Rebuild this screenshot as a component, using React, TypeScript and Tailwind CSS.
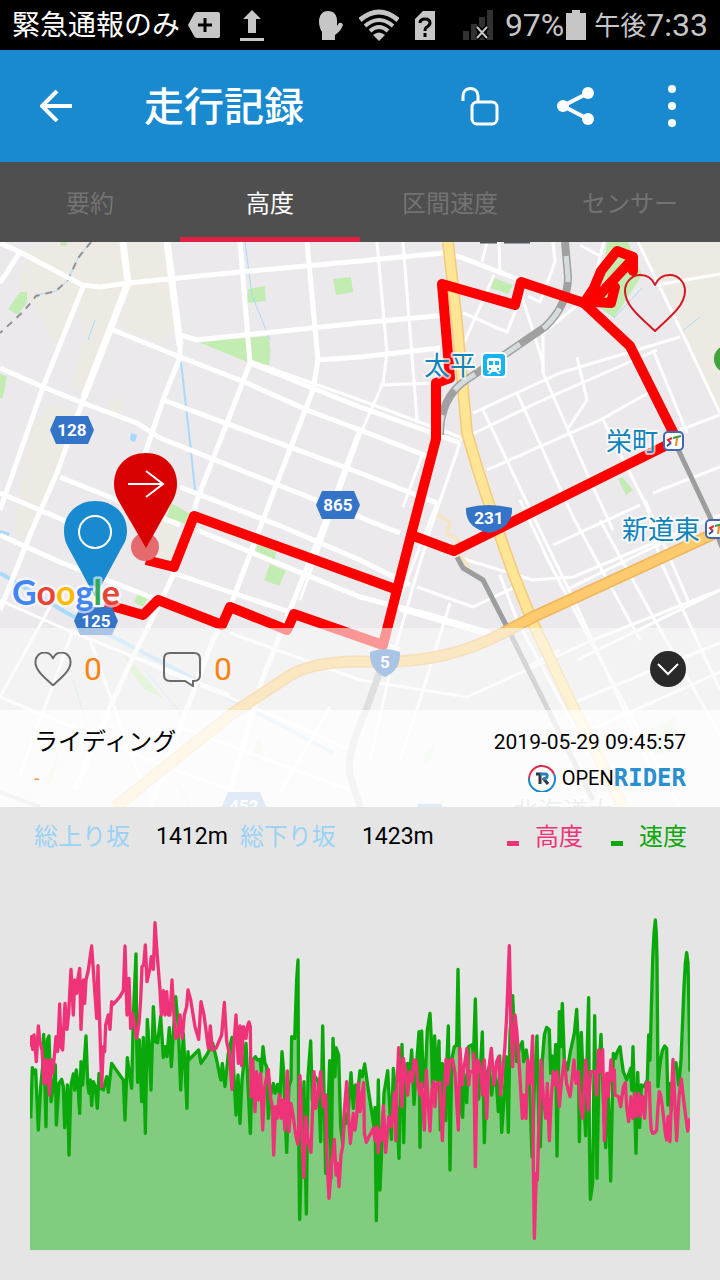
import React, { useState } from 'react'

const CJK = "font-['Roboto','Noto_Sans_CJK_JP',sans-serif]";

const tabs = ['要約', '高度', '区間速度', 'センサー'];

const roads = [
  'M0 243L20 252L82 285L100 287L128 283L240 272L360 261L443 253L460 257L520 280L584 303',
  'M20 252L0 283',
  'M123 242L128 283L83 400L57 473L32 530L18 565L0 610',
  'M83 287L43 387L0 510',
  'M167 242L180 337L180 357L163 400L147 448L125 510',
  'M240 242L250 363L227 423L197 500L177 567L160 603L133 657L110 707L75 790',
  'M307 242L318 360L313 390L277 483L230 607L213 640L180 727L150 807',
  'M113 330L180 357L247 383L307 410L360 430L432 458',
  'M180 335L197 340L360 323L447 315',
  'M250 363L360 407L460 443',
  'M318 360L360 357L440 348',
  'M0 368L43 387L83 403L137 423L160 438L283 487L400 533',
  'M163 400L360 473L437 503',
  'M60 477L117 500L180 525',
  'M180 487L283 527L360 560L410 585',
  'M197 530L360 597L430 615L490 633',
  'M0 493L63 520L110 540',
  'M0 535L60 562L158 600',
  'M173 573L290 612L400 650',
  'M360 430L330 510L262 680L230 790',
];

const streets = [
  'M377 242L387 353L383 383L360 435L300 600',
  'M403 242L417 420',
  'M487 242L482 262',
  'M499 242L500 275',
  'M553 242L555 262L540 302L528 296',
  'M520 290L543 363L543 373L593 487L613 530',
  'M463 313L507 332L520 300',
  'M460 352L494 275',
  'M380 385L433 383',
  'M604 242L590 295L543 333L543 373',
  'M580 245L600 256',
  'M638 242L687 343L720 413',
  'M657 285L720 274',
  'M473 413L560 373L680 337',
  'M460 440L543 400L657 350',
  'M487 470L600 420L650 392',
  'M577 357L587 400L567 430',
  'M517 393L573 517L640 640',
  'M483 410L540 530L580 613L660 790',
  'M653 350L687 433',
  'M603 420L647 507L660 560L720 690',
  'M653 493L720 467',
  'M680 430L720 415',
  'M460 443L430 530L412 590L395 650L370 760',
  'M423 453L403 507',
  'M437 503L395 610',
  'M417 587L473 607L513 588',
  'M400 610L487 635',
  'M450 603L420 700L400 760',
  'M520 500L548 560L590 640L680 807',
  'M600 520L653 617L720 735',
  'M457 557L510 573L533 580L573 577L720 515',
  'M570 588L668 540',
  'M553 545L640 505',
  'M577 660L720 590',
  'M527 667L560 650',
  'M573 703L660 667L720 643',
  'M590 730L720 672',
  'M230 633L360 680L467 697L593 640L720 590',
  'M0 600L67 630L230 695',
  'M0 697L167 767L260 800',
  'M50 607L0 697',
  'M73 630L20 775',
  'M90 640L143 787',
  'M330 707L280 793',
  'M133 657L300 727L360 755',
  'M180 727L350 790',
  'M645 500L690 605',
  'M500 575L517 620L560 700L610 790',
];

const route = 'M105 604L143 615L158 600L222 625L230 607L287 630L294 614L383 645L411 535L436 439L436 383L450 378L442 284L515 305L521 282L584 303L630 346L677 440L454 551L411 535M146 560L174 567L194 516L395 589';
const loop = 'M584 303L594 288L601 271L617 251L633 257L633 271M630 262L604 290L594 302L611 303L615 287';

// both series share the 1980 x 1050 plot area
const speed = '2,655 7,503 12,520 17,510 25,690 32,560 38,500 41,403 48,680 52,420 57,408 63,605 69,560 76,495 79,675 87,550 95,538 100,560 104,683 112,555 117,765 123,555 130,522 134,570 139,510 144,555 149,640 153,485 158,555 168,408 173,550 177,580 181,540 185,617 190,545 196,560 202,625 207,520 213,565 220,570 230,530 235,577 245,490 260,512 280,540 285,660 292,473 298,520 305,565 310,350 318,162 320,420 323,547 328,420 335,605 340,412 346,700 352,358 358,450 363,570 370,320 376,425 383,428 392,350 400,472 406,440 411,470 418,383 424,500 430,400 437,290 445,380 452,570 460,400 471,625 474,455 476,480 506,450 513,490 530,465 548,430 560,480 570,530 573,540 577,490 585,560 595,460 606,412 612,530 618,645 624,525 630,670 636,540 648,430 661,700 668,480 676,470 682,480 690,478 694,515 699,440 705,490 710,500 715,655 721,590 730,550 735,580 743,553 750,590 756,455 761,515 770,757 777,560 783,540 785,410 794,415 800,240 804,180 806,700 809,958 816,700 822,545 829,942 834,530 842,423 847,600 855,530 865,545 872,725 878,378 887,820 892,700 899,482 903,835 909,415 915,530 918,443 926,465 932,680 938,730 945,640 952,670 963,518 970,625 976,555 982,590 990,512 997,530 1004,492 1015,570 1032,680 1035,622 1039,962 1045,540 1050,870 1057,700 1062,580 1073,512 1078,600 1084,718 1090,505 1098,590 1107,775 1111,560 1116,433 1121,728 1125,560 1133,490 1138,540 1145,450 1152,613 1160,490 1167,395 1170,742 1175,393 1180,560 1185,545 1192,390 1200,340 1205,440 1208,590 1214,408 1220,540 1227,423 1231,690 1237,490 1247,662 1250,500 1255,378 1260,810 1265,480 1273,440 1280,436 1284,208 1288,440 1295,640 1298,652 1302,520 1310,608 1316,440 1328,433 1330,480 1336,297 1342,560 1346,597 1352,490 1357,396 1363,728 1370,520 1378,500 1385,585 1393,515 1400,560 1405,635 1409,468 1415,697 1422,600 1429,470 1435,697 1440,400 1448,287 1453,400 1460,485 1468,445 1477,425 1481,485 1489,450 1495,500 1500,590 1506,770 1513,560 1521,408 1527,700 1531,740 1537,480 1543,405 1550,382 1558,390 1562,520 1566,468 1572,540 1577,433 1581,768 1588,335 1592,440 1597,310 1603,480 1612,510 1622,450 1633,400 1640,328 1645,440 1648,725 1654,397 1660,560 1667,707 1672,440 1676,293 1678,700 1681,898 1688,850 1694,347 1701,835 1707,500 1713,403 1720,600 1727,743 1733,520 1742,843 1747,600 1750,460 1756,475 1762,455 1770,440 1775,480 1780,515 1790,540 1802,505 1805,570 1809,440 1818,760 1823,517 1829,682 1834,555 1842,560 1852,540 1856,405 1860,480 1864,330 1868,180 1872,100 1876,60 1879,100 1881,180 1884,560 1888,510 1892,480 1897,452 1904,438 1910,445 1914,615 1920,550 1924,630 1930,500 1938,488 1946,555 1953,480 1958,360 1962,260 1966,190 1970,158 1974,190 1976,280 1980,515';

const altitude = '0,440 5,410 8,448 12,405 19,485 25,378 30,425 36,450 42,550 45,480 50,550 54,480 58,585 65,480 68,520 73,470 78,410 83,455 89,312 93,440 98,450 105,310 111,388 116,340 123,208 130,345 134,240 140,280 143,240 149,205 153,388 160,240 164,310 168,240 175,210 185,138 192,240 200,355 204,197 210,400 215,560 220,440 224,455 227,375 235,345 240,388 245,305 251,312 270,290 280,272 285,138 291,345 297,235 302,385 308,340 320,415 327,370 332,300 336,200 341,195 346,135 351,245 360,205 364,170 370,208 375,68 382,170 390,270 394,345 400,272 405,345 410,275 415,345 420,345 426,240 431,330 437,415 443,410 450,345 457,415 463,345 470,320 474,270 482,300 495,380 506,418 513,305 522,345 535,445 541,378 547,450 558,445 575,405 583,307 590,425 598,460 606,568 612,430 618,345 625,490 630,378 635,497 640,380 648,415 652,380 657,366 661,380 663,590 668,480 675,635 680,515 686,600 692,520 698,690 704,560 715,508 722,595 727,620 731,765 737,620 741,655 748,585 753,655 758,600 765,690 772,513 777,695 783,610 790,650 797,705 803,732 806,690 810,527 816,700 821,832 828,650 834,720 843,757 852,515 857,625 862,600 872,515 880,620 887,585 892,800 897,895 905,790 913,718 918,825 923,790 927,860 933,765 938,740 942,645 950,545 955,640 961,730 970,640 975,690 980,650 985,548 990,635 1001,548 1003,700 1009,727 1016,712 1025,695 1030,685 1035,722 1041,680 1045,757 1050,690 1055,720 1060,617 1067,757 1076,650 1083,680 1088,640 1093,578 1097,722 1101,560 1106,443 1111,530 1116,620 1120,475 1127,515 1133,585 1140,515 1146,545 1152,480 1158,482 1163,550 1170,585 1175,550 1183,690 1189,510 1194,600 1200,693 1205,580 1210,545 1215,620 1220,550 1230,548 1237,722 1242,600 1248,478 1253,552 1260,480 1268,478 1275,520 1285,690 1290,445 1296,555 1304,490 1311,445 1316,555 1320,515 1330,515 1331,460 1336,800 1342,480 1348,490 1353,520 1358,585 1363,480 1370,655 1376,510 1384,445 1392,555 1400,485 1406,470 1412,585 1418,510 1424,450 1430,350 1438,137 1443,380 1448,500 1455,345 1461,400 1468,500 1477,655 1481,585 1488,655 1493,480 1500,550 1508,408 1510,800 1513,1015 1519,820 1522,840 1526,700 1533,480 1540,590 1547,655 1552,550 1558,722 1564,590 1570,515 1576,555 1581,515 1588,620 1596,530 1603,480 1610,552 1620,590 1626,540 1632,480 1638,550 1645,515 1652,620 1658,655 1667,480 1675,630 1682,515 1695,515 1700,585 1706,450 1712,515 1718,448 1723,722 1730,520 1735,590 1743,480 1748,540 1753,510 1755,585 1766,590 1772,620 1780,560 1786,548 1790,620 1796,665 1803,590 1808,655 1815,580 1819,650 1827,580 1831,650 1838,590 1844,655 1850,548 1858,548 1861,650 1864,690 1868,700 1875,698 1880,690 1884,620 1888,575 1892,585 1897,620 1906,700 1910,720 1914,650 1920,725 1924,600 1929,478 1935,620 1940,722 1947,590 1954,537 1962,610 1973,693 1980,655';

const StatusBar = () => (
  <div className="flex h-[50px] items-center bg-black pr-3 pl-3 text-[#c6c6c6]">
    <span className="pt-[2px] text-[28px] leading-[48px] text-white">緊急通報のみ</span>
    <svg className="ml-2 h-8 w-8" viewBox="0 0 32 32" aria-hidden="true">
      <path d="M9 3H30Q32 3 32 5V27Q32 29 30 29H9Q7 29 6 27L0 16L6 5Q7 3 9 3Z" fill="#c6c6c6" />
      <path d="M17 9V23M10 16H24" stroke="#000" strokeWidth="3" />
    </svg>
    <svg className="ml-5 h-8 w-6" viewBox="0 0 24 32" aria-hidden="true">
      <path d="M12 1L21 10H16V24H8V10H3ZM0 29H24V32H0Z" fill="#c6c6c6" />
    </svg>
    <span className="flex-1" />
    <svg className="h-8 w-6" viewBox="0 0 24 32" aria-hidden="true">
      <path d="M3 31V23C0 18 0 14 0 11C1 5 4 2 9 2C15 2 18 6 18 12V17L20 14Q23 13 24 16C22 21 19 24 16 26V31Z" fill="#c6c6c6" />
    </svg>
    <svg className="ml-4 h-8 w-10" viewBox="0 0 40 32" fill="none" stroke="#c6c6c6" aria-hidden="true">
      <path d="M1 11Q20 -5 39 11" strokeWidth="5" />
      <path d="M6 17Q20 5 34 17" strokeWidth="4" />
      <path d="M11 22Q20 14 29 22" strokeWidth="4" />
      <path d="M14 26Q20 21 26 26L20 32Z" fill="#c6c6c6" stroke="none" />
    </svg>
    <svg className="ml-4 h-8 w-5" viewBox="0 0 20 32" aria-hidden="true">
      <path d="M8 2H20V31H0V10Z" fill="#c6c6c6" />
      <path d="M5 14Q5 10 10 10Q15 10 15 14Q15 16 12 18Q10 19 10 22M10 24V28" stroke="#000" strokeWidth="3" fill="none" />
    </svg>
    <svg className="ml-7 h-8 w-[30px]" viewBox="0 0 30 32" aria-hidden="true">
      <path d="M0 22H6V31H0ZM8 15H14V31H8ZM16 8H22V31H16ZM24 1H30V31H24Z" fill="#323232" />
      <path d="M14 18L24 29M24 18L14 29" stroke="#000" strokeWidth="5" />
      <path d="M14 18L24 29M24 18L14 29" stroke="#c6c6c6" strokeWidth="2" />
    </svg>
    <span className="ml-3 text-[32px]">97%</span>
    <svg className="ml-[2px] h-8 w-5" viewBox="0 0 20 32" aria-hidden="true">
      <path d="M6 1H14V4H20V31H0V4H6Z" fill="#c6c6c6" />
    </svg>
    <span className="ml-2 pt-[2px] text-[26px]">午後</span>
    <span className="text-[32px]">7:33</span>
  </div>
)

const Hexagon = ({ x, y, label }: { x: number; y: number; label: string }) => (
  <g>
    <path d={`M${x - 22} ${y}L${x - 16} ${y - 14}H${x + 16}L${x + 22} ${y}L${x + 16} ${y + 14}H${x - 16}Z`} fill="#3474c8" />
    <text x={x} y={y + 6} textAnchor="middle" fontSize="17" fontWeight="700" fill="#fff">{label}</text>
  </g>
)

const SubwayBadge = ({ x, y }: { x: number; y: number }) => (
  <g fill="none">
    <rect x={x} y={y} width="19" height="18" rx="4" fill="#fff" stroke="#4666ae" strokeWidth="2" />
    <path d={`M${x + 8} ${y + 6}L${x + 4} ${y + 8}L${x + 7} ${y + 11}`} stroke="#d92c3a" strokeWidth="2" />
    <path d={`M${x + 7} ${y + 11}L${x + 3} ${y + 14}`} stroke="#2455a4" strokeWidth="2" />
    <path d={`M${x + 9} ${y + 6}L${x + 17} ${y + 4}`} stroke="#2d9a4b" strokeWidth="2" />
    <path d={`M${x + 13} ${y + 6}L${x + 12} ${y + 14}`} stroke="#ee8a1d" strokeWidth="2" />
  </g>
)

const RouteMap = () => (
  <svg className="block h-auto w-full" viewBox="0 242 720 565" role="img" aria-label="Map">
    <rect x="0" y="242" width="720" height="565" fill="#ebe9ec" />
    <g fill="#edeae3">
      <path d="M26 250L60 242H163L176 325L162 342L118 328L126 300L110 330L84 395L70 385L84 340L80 300L55 345L30 300L20 285Z" />
      <path d="M30 430L50 405L75 412L50 490L20 545L15 520Z" />
      <path d="M640 242H720V413L690 350L660 290Z" />
      <path d="M160 520L178 510L172 560L158 555Z" />
      <path d="M105 410L115 396L127 405L120 413Z" />
    </g>
    <g fill="#c3ecb2">
      <path d="M20 292L27 292L27 302L18 315L8 309Z" />
      <path d="M248 289L265 286L266 301L247 303Z" />
      <path d="M333 279L351 277L353 292L336 295Z" />
      <path d="M198 342L268 336Q272 348 269 365L250 363Z" />
      <path d="M0 374L7 376L3 398L0 398Z" />
      <path d="M60 242H68L66 246H61Z" />
      <path d="M171 503L190 514L186 524L167 517Z" />
      <path d="M257 544L276 552L275 560L256 552Z" />
      <path d="M270 564L286 571L279 586L264 580Z" />
      <path d="M138 594L148 598L143 607L134 602Z" />
      <path d="M494 278L513 285L508 294L491 288Z" />
      <path d="M607 242H628L642 275L624 303L614 318L600 308Z" />
      <path d="M622 477L633 490L626 495L618 479Z" />
      <path d="M124 653L163 698L145 690L130 670Z" />
      <path d="M65 730L45 787L52 782Z" />
      <path d="M255 742L262 740L260 762L252 760Z" />
      <path d="M650 730L677 716L672 750L655 755Z" />
      <path d="M425 753L435 742L431 760L424 765Z" />
    </g>
    <g fill="none" stroke="#a9dafa" strokeWidth="2">
      <path d="M91 242L78 258L68 280L56 291L36 295M95 320L88 340M245 242L252 295L270 340" strokeWidth="1" />
      <path d="M181 362L190 442L195 490" />
      <path d="M0 573L67 613L177 670L333 753" strokeWidth="4" />
      <path d="M145 670L180 712L183 735M73 680L87 725M642 288L614 318M680 333L700 317M175 780L190 807" strokeWidth="1" />
      <path d="M0 532L9 535" strokeWidth="4" />
    </g>
    <path d="M91 242L78 258L68 280L56 291L36 296L24 311L0 333" fill="none" stroke="#8f9296" strokeWidth="2" strokeDasharray="7 6" />
    <path d="M131 433L137 435L135 442L130 440Z" fill="#a5d8ff" />
    <g fill="none" stroke="#fff" strokeLinejoin="round">
      {streets.map((d) => <path key={d} d={d} strokeWidth="3" />)}
      {roads.map((d) => <path key={d} d={d} strokeWidth="5" />)}
      <path d="M167 242L180 345M123 242L128 283L84 397" strokeWidth="7" />
      <path d="M250 361L360 400L460 437" strokeWidth="3" />
    </g>
    <path d="M480 242H497M504 242H530" stroke="#4c5560" strokeWidth="3" />
    <path d="M437 514L450 522L447 533L458 540L455 550L470 568" fill="none" stroke="#f6e4c4" strokeWidth="4" />
    <g fill="none" strokeLinejoin="round">
      <path d="M448 242L457 323L467 433L477 467L490 507L513 573L533 623L573 707L623 807" stroke="#f3c97c" strokeWidth="12" />
      <path d="M448 242L457 323L467 433L477 467L490 507L513 573L533 623L573 707L623 807" stroke="#ffe594" strokeWidth="9" />
      <path d="M565 242L568 277Q568 305 545 327L507 353L466 380Q440 398 440 435" stroke="#a0a0a0" strokeWidth="8" />
      <path d="M565 242L568 277Q568 305 545 327L507 353L466 380Q440 398 440 435" stroke="#d5dcde" strokeWidth="5" strokeDasharray="26 28" strokeDashoffset="-14" />
      <path d="M457 557L463 568L483 580L507 627L593 800M677 447L710 517L722 547" stroke="#9c9e9d" strokeWidth="5" />
      <path d="M384 660L366 710Q346 755 350 775L360 807" stroke="#b5b7b6" strokeWidth="7" />
      <path d="M0 792L40 807" stroke="#b5b7b6" strokeWidth="4" />
      <path d="M722 530L533 617L503 633Q450 662 380 662Q310 658 283 680L233 713L115 807" stroke="#efb65a" strokeWidth="12" />
      <path d="M722 530L533 617L503 633Q450 662 380 662Q310 658 283 680L233 713L115 807" stroke="#fdcb6e" strokeWidth="9" />
    </g>
    <g fill="none" stroke="#f00" strokeLinejoin="round">
      <path d={route} strokeWidth="10" />
      <path d={loop} strokeWidth="10" strokeLinecap="round" />
    </g>
    <circle cx="728" cy="359" r="14" fill="#3fa43c" />
    <circle cx="145" cy="547" r="14" fill="#e46a6d" />

    <g fontFamily="Roboto, 'Noto Sans CJK JP', sans-serif">
      <Hexagon x={72} y={430} label="128" />
      <Hexagon x={338} y={505} label="865" />
      <Hexagon x={96} y={621} label="125" />
      <Hexagon x={244} y={806} label="452" />
      <rect x="418" y="804" width="24" height="10" fill="#3474c8" />
      <path d="M466 508Q489 502 512 508Q513 528 489 533Q465 528 466 508Z" fill="#3474c8" />
      <text x="489" y="524" textAnchor="middle" fontSize="17" fontWeight="700" fill="#fff">231</text>
      <path d="M370 652Q385 646 400 652Q401 670 385 677Q369 670 370 652Z" fill="#3474c8" />
      <text x="385" y="668" textAnchor="middle" fontSize="17" fontWeight="700" fill="#fff">5</text>
      <g fontSize="26" fill="#0f84bb" stroke="#fff" strokeWidth="4" strokeOpacity=".7" strokeLinejoin="round" paintOrder="stroke">
        <text x="424" y="375">太平</text>
        <text x="606" y="451">栄町</text>
        <text x="622" y="539">新道東</text>
        <text x="513" y="820" fontSize="25" fill="#8a9aa0">北海道大</text>
      </g>
    </g>
    <rect x="482" y="353" width="24" height="24" rx="4" fill="#18b4f1" stroke="#fff" strokeWidth="2" />
    <path d="M490 358H498Q501 358 501 361V369Q501 371 498 371L501 374H498L496 372H492L490 374H487L490 371Q487 371 487 369V361Q487 358 490 358Z" fill="#fff" />
    <path d="M489 361H493V365H489ZM495 361H499V365H495ZM489 368H491V370H489ZM497 368H499V370H497Z" fill="#18b4f1" />
    <SubwayBadge x={664} y={432} />
    <SubwayBadge x={706} y={520} />

    <path d="M95 597L68 547Q64 540 64 531C64 513 78 501 95 501C113 501 127 513 127 531Q127 540 122 547Z" fill="#1a8ad0" />
    <circle cx="95" cy="532" r="16" fill="none" stroke="#fff" strokeWidth="2" />
    <path d="M146 548L118 500Q114 492 114 484C114 466 127 453 146 453C164 453 177 466 177 484Q177 492 173 500Z" fill="#d80000" />
    <path d="M128 484H163M146 471L163 484L146 497" fill="none" stroke="#fff" strokeWidth="2" />

    <text x="12" y="605" fontSize="34" fontWeight="700" fontFamily="Lato, sans-serif" stroke="#fff" strokeWidth="5" strokeOpacity=".6" paintOrder="stroke" strokeLinejoin="round">
      <tspan fill="#4285f4">G</tspan>
      <tspan fill="#ea4335">o</tspan>
      <tspan fill="#fbbc05">o</tspan>
      <tspan fill="#4285f4">g</tspan>
      <tspan fill="#34a853">l</tspan>
      <tspan fill="#ea4335">e</tspan>
    </text>
  </svg>
)

const HeartShape = ({ className }: { className: string }) => (
  <svg className={className} viewBox="0 0 62 58" fill="none" stroke="currentColor" aria-hidden="true">
    <path d="M31 57C20 46 1 33 1 17C1 8 8 1 16 1C24 1 29 6 31 11C33 6 38 1 46 1C54 1 61 8 61 17C61 33 42 46 31 57Z" strokeWidth="2" vectorEffect="non-scaling-stroke" strokeLinejoin="round" />
  </svg>
)

const Home = () => {
  const [active, setActive] = useState('高度');
  const [liked, setLiked] = useState(false);

  return (
    <div className={`flex min-h-screen flex-col overflow-x-hidden bg-[#e5e5e5] text-black ${CJK}`}>
      <StatusBar />

      <header className="flex h-28 items-center bg-[#1a8ad0] text-white">
        <button aria-label="Back" className="ml-10 h-8 w-8">
          <svg viewBox="0 0 32 32" fill="none" stroke="currentColor" strokeWidth="4">
            <path d="M32 16H3M17 1L2 16L17 31" />
          </svg>
        </button>
        <h1 className="ml-[72px] flex-1 pt-1 text-[40px] leading-[56px] font-medium">走行記録</h1>
        <button aria-label="Privacy" className="h-10 w-10">
          <svg viewBox="0 0 40 40" fill="none" stroke="currentColor" strokeWidth="3">
            <path d="M3 15V10C3 0 18 0 18 10V16" />
            <rect x="12" y="16" width="25" height="22" rx="5" />
          </svg>
        </button>
        <button aria-label="Share" className="ml-14 h-10 w-10">
          <svg viewBox="0 0 40 40" fill="currentColor" stroke="currentColor">
            <path d="M32 7L7 20L32 33" fill="none" strokeWidth="4" />
            <g stroke="none">
              <circle cx="32" cy="7" r="6" />
              <circle cx="7" cy="20" r="6" />
              <circle cx="32" cy="33" r="6" />
            </g>
          </svg>
        </button>
        <button aria-label="More" className="mr-7 ml-14 h-11 w-10">
          <svg viewBox="0 0 40 44" fill="currentColor">
            <circle cx="20" cy="5" r="4" />
            <circle cx="20" cy="22" r="4" />
            <circle cx="20" cy="39" r="4" />
          </svg>
        </button>
      </header>

      <nav className="flex h-20 bg-[#4f4f4f]">
        {tabs.map((tab) => (
          <button
            key={tab}
            onClick={() => setActive(tab)}
            className={
              tab === active
                ? 'flex-1 border-b-[5px] border-[#e01f45] pt-2 text-2xl text-white'
                : 'flex-1 border-b-[5px] border-transparent pt-2 text-2xl text-[#737373]'
            }
          >
            {tab}
          </button>
        ))}
      </nav>

      <section className="relative">
        <RouteMap />
        <button
          aria-label="Like"
          aria-pressed={liked}
          onClick={() => setLiked(!liked)}
          className="absolute top-8 right-[34px] text-[#d31820]"
        >
          <HeartShape className="h-[58px] w-[62px]" />
        </button>

        <div className="absolute inset-x-0 bottom-0">
          <div className="flex h-[82px] items-center bg-[#fafafa]/60 px-[34px]">
            <HeartShape className="h-[34px] w-[38px] text-[#6b6b6b]" />
            <span className="ml-3 text-[32px] text-[#f98412]">0</span>
            <svg className="ml-[60px] h-9 w-10" viewBox="0 0 40 36" fill="none" stroke="#6b6b6b" strokeWidth="2" aria-hidden="true">
              <path d="M8 2H32Q38 2 38 8V24Q38 30 32 30H31V35L23 30H8Q2 30 2 24V8Q2 2 8 2Z" />
            </svg>
            <span className="ml-3 flex-1 text-[32px] text-[#f98412]">0</span>
            <button aria-label="Collapse" className="h-9 w-9 rounded-full bg-[#292929]">
              <svg viewBox="0 0 36 36" fill="none" stroke="#fff" strokeWidth="2">
                <path d="M8 13L18 23L28 13" />
              </svg>
            </button>
          </div>
          <div className="flex h-[97px] justify-between bg-white/85 px-[34px] pt-4">
            <div>
              <h2 className="text-2xl leading-8">ライディング</h2>
              <p className="mt-1 text-xl leading-8 text-[#f0a04b]">-</p>
            </div>
            <div className="flex flex-col items-end">
              <time className="text-[21px] leading-8">2019-05-29 09:45:57</time>
              <div className="mt-1 flex items-center text-xl leading-8">
                <svg className="mr-[6px] h-7 w-7" viewBox="0 0 28 28" fill="none" aria-hidden="true">
                  <path d="M1 14A13 13 0 0 1 26 10" stroke="#e2264d" strokeWidth="2" />
                  <path d="M26 10A13 13 0 1 1 1 14" stroke="#1a8ad0" strokeWidth="2" />
                  <path d="M8 10H12V20M15 14L20 20" stroke="#2d3540" strokeWidth="3" />
                  <path d="M12 10H17Q20 10 19 13Q18 15 15 15" stroke="#2b7fb8" strokeWidth="3" />
                </svg>
                <span>OPEN</span>
                <span className="font-['DejaVu_Sans_Mono',monospace] text-2xl leading-8 font-bold text-[#2a8fd0]">RIDER</span>
              </div>
            </div>
          </div>
        </div>
      </section>

      <section className="flex flex-1 flex-col px-[30px]">
        <div className="flex h-[60px] items-center pl-1 text-[23px]">
          <span className="text-2xl text-[#9ad2f5]">総上り坂</span>
          <span className="ml-[26px]">1412m</span>
          <span className="ml-3 text-2xl text-[#9ad2f5]">総下り坂</span>
          <span className="ml-[26px] flex-1">1423m</span>
          <span className="mt-3 h-[5px] w-3 bg-[#ef3379]" />
          <span className="ml-4 text-2xl text-[#ef3379]">高度</span>
          <span className="mt-3 ml-7 h-[5px] w-3 bg-[#0aa80a]" />
          <span className="mr-[3px] ml-4 text-2xl text-[#0aa80a]">速度</span>
        </div>
        <svg className="mt-[33px] block h-auto w-full" viewBox="0 0 1980 1050" fill="none" strokeLinejoin="round" role="img" aria-label="Chart">
          <polygon points={`0,1050 0,655 ${speed} 1980,1050`} fill="#82cc80" />
          <polyline points={speed} stroke="#0aa80a" strokeWidth="10" />
          <polyline points={altitude} stroke="#ef3379" strokeWidth="10" />
        </svg>
      </section>
    </div>
  )
}

export default Home;
